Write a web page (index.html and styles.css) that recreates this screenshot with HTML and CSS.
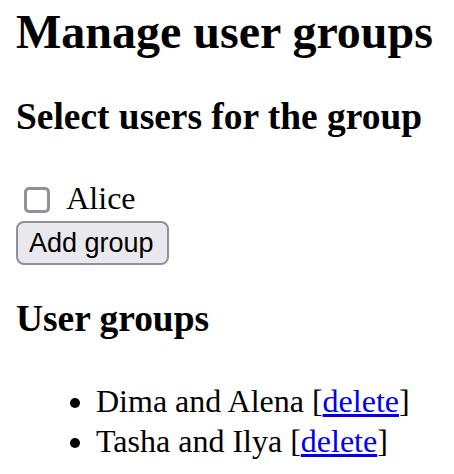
FILE: index.html
```html
<!DOCTYPE html>
<html>
<head>
<meta charset="utf-8">
<title>Manage user groups</title>
<link rel="stylesheet" href="styles.css">
</head>
<body>
<h2 class="title">Manage user groups</h2>
<h3 class="subtitle">Select users for the group</h3>
<div class="user-row"><input type="checkbox" class="check"> Alice</div>
<button class="btn">Add group</button>
<h3 class="subtitle groups-title">User groups</h3>
<ul class="groups">
  <li>Dima and Alena [<a href="#" class="link">delete</a>]</li>
  <li>Tasha and Ilya [<a href="#" class="link">delete</a>]</li>
</ul>
</body>
</html>
```

FILE: styles.css
```css
html, body {
  background: #ffffff;
}
body {
  margin: 0;
  padding: 4px 16px 0;
  font-family: "Liberation Serif", serif;
  font-size: 32px;
  line-height: 40px;
  color: #000000;
}
.title {
  font-size: 48px;
  line-height: 56px;
  font-weight: bold;
  margin: 0;
}
.subtitle {
  font-size: 37.44px;
  line-height: 44px;
  font-weight: bold;
  margin: 35.4px 0 0;
}
.user-row {
  margin-top: 38.8px;
  height: 40px;
}
.check {
  appearance: none;
  -webkit-appearance: none;
  box-sizing: border-box;
  width: 26px;
  height: 26px;
  margin: 0 10px 0 8px;
  border: 3px solid #8f8f9d;
  border-radius: 5px;
  background: #ffffff;
  vertical-align: -4px;
}
.btn {
  display: block;
  box-sizing: border-box;
  height: 44px;
  margin-top: 3px;
  padding: 0 13px 0 11px;
  font-family: "Liberation Sans", sans-serif;
  font-size: 27px;
  line-height: 40px;
  color: #000000;
  background: #e9e9ed;
  border: 2px solid #8f8f9d;
  border-radius: 8px;
}
.groups-title {
  margin-top: 32.1px;
}
.groups {
  margin: 39.8px 0 0;
  padding-left: 80px;
  list-style: disc;
}
.groups li {
  line-height: 40px;
}
.link {
  color: #0000ee;
  text-decoration: underline;
}
```
